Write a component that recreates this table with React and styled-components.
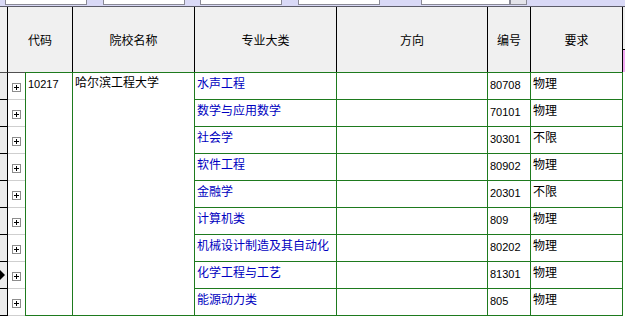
import React from 'react';
import styled, { createGlobalStyle } from 'styled-components';

const GlobalStyle = createGlobalStyle`
  body {
    margin: 0;
    background: #ffffff;
    font-family: "Noto Sans CJK SC", "Noto Sans", sans-serif;
  }
`;

const GREEN = '#1e7a1e';

const filters = [
  { w: 82, ml: 5 },
  { w: 82, ml: 16 },
  { w: 82, ml: 15 },
  { w: 82, ml: 16 },
  { w: 89, ml: 41 },
];

const columns = ['代码', '院校名称', '专业大类', '方向', '编号', '要求'];

const majors = [
  { name: '水声工程', num: '80708', req: '物理' },
  { name: '数学与应用数学', num: '70101', req: '物理' },
  { name: '社会学', num: '30301', req: '不限' },
  { name: '软件工程', num: '80902', req: '物理' },
  { name: '金融学', num: '20301', req: '不限' },
  { name: '计算机类', num: '809', req: '物理' },
  { name: '机械设计制造及其自动化', num: '80202', req: '物理' },
  { name: '化学工程与工艺', num: '81301', req: '物理' },
  { name: '能源动力类', num: '805', req: '物理' },
];

const CURRENT_ROW = 7;

const Toolbar = styled.div`
  display: flex;
  height: 7px;
  box-sizing: border-box;
  background: #d9d9f6;
  border-bottom: 1px solid #5c5c68;
  overflow: hidden;
`;

const FilterBox = styled.div`
  width: ${({ $w }) => $w}px;
  margin-left: ${({ $ml }) => $ml}px;
  height: 5px;
  box-sizing: border-box;
  background: #ffffff;
  border: 1px solid #8a8a96;
  border-top: none;
`;

const DropButton = styled.div`
  width: 17px;
  height: 5px;
  box-sizing: border-box;
  background: #e4e4ea;
  border: 1px solid #8a8a96;
  border-top: none;
`;

const Header = styled.div`
  display: grid;
  grid-template-columns: 8px 65px 122px 142px 151px 43px 92px 2px;
  height: 65px;
  background: #f0f0f0;
`;

const HeadCell = styled.div`
  display: flex;
  align-items: center;
  justify-content: center;
  box-sizing: border-box;
  border-right: 1px solid #000000;
  font-size: 12px;
  color: #000000;
`;

const HeadTail = styled.div`
  display: flex;
  flex-direction: column;
  justify-content: flex-end;
`;

const PinkMark = styled.div`
  height: 22px;
  border-top: 1px solid #000000;
  background: #f2a8f2;
`;

const Body = styled.div`
  display: grid;
  grid-template-columns: 8px 17px 48px 122px 142px 151px 43px 92px 2px;
  grid-template-rows: 28px repeat(8, 27px);
`;

const Selector = styled.div`
  display: flex;
  align-items: center;
  box-sizing: border-box;
  background: #ececec;
  border-right: 1px solid #000000;
  border-bottom: 1px solid #000000;
  border-top: ${({ $first }) => ($first ? '1px solid #505050' : 'none')};
`;

const Arrow = styled.div`
  width: 0;
  height: 0;
  border-top: 5px solid transparent;
  border-bottom: 5px solid transparent;
  border-left: 5px solid #000000;
`;

const ExpandCell = styled.div`
  display: flex;
  align-items: center;
  justify-content: center;
  padding-top: 3px;
  box-sizing: border-box;
  border-bottom: 1px solid #cfcfcf;
  border-top: ${({ $first }) => ($first ? '1px solid #505050' : 'none')};
`;

const PlusBox = styled.div`
  position: relative;
  width: 9px;
  height: 9px;
  box-sizing: border-box;
  border: 1px solid #8c8c8c;
  background: #ffffff;

  &::before,
  &::after {
    content: '';
    position: absolute;
    background: #000000;
  }
  &::before {
    left: 1px;
    top: 3px;
    width: 5px;
    height: 1px;
  }
  &::after {
    left: 3px;
    top: 1px;
    width: 1px;
    height: 5px;
  }
`;

const SpanCell = styled.div`
  grid-row: 1 / 10;
  box-sizing: border-box;
  border-top: 1px solid ${GREEN};
  border-bottom: 1px solid ${GREEN};
  border-right: 1px solid ${GREEN};
  border-left: ${({ $left }) => ($left ? `1px solid ${GREEN}` : 'none')};
  padding: ${({ $num }) => ($num ? '4px 2px' : '2px 2px')};
  font-family: ${({ $num }) =>
    $num ? '"Liberation Sans", Arial, sans-serif' : '"Noto Sans CJK SC", sans-serif'};
  font-size: ${({ $num }) => ($num ? '11px' : '12px')};
  line-height: 14px;
  color: #000000;
`;

const Cell = styled.div`
  box-sizing: border-box;
  border-right: 1px solid ${GREEN};
  border-bottom: 1px solid ${GREEN};
  border-top: ${({ $first }) => ($first ? `1px solid ${GREEN}` : 'none')};
  padding: ${({ $num }) => ($num ? '5px 2px 0' : '3px 2px 0')};
  font-family: ${({ $num }) =>
    $num ? '"Liberation Sans", Arial, sans-serif' : '"Noto Sans CJK SC", sans-serif'};
  font-size: ${({ $num }) => ($num ? '11px' : '12px')};
  line-height: 14px;
  color: ${({ $link }) => ($link ? '#0000c0' : '#000000')};
  white-space: nowrap;
  overflow: hidden;
`;

const Tail = styled.div``;

export default function App() {
  return (
    <>
      <GlobalStyle />
      <Toolbar>
        {filters.map((f, i) => (
          <FilterBox key={i} $w={f.w} $ml={f.ml} />
        ))}
        <DropButton />
      </Toolbar>
      <Header>
        <HeadCell />
        {columns.map((c) => (
          <HeadCell key={c}>{c}</HeadCell>
        ))}
        <HeadTail>
          <PinkMark />
        </HeadTail>
      </Header>
      <Body>
        {majors.map((m, i) => (
          <React.Fragment key={m.name}>
            <Selector $first={i === 0} style={{ gridColumn: 1, gridRow: i + 1 }}>
              {i === CURRENT_ROW && <Arrow />}
            </Selector>
            <ExpandCell $first={i === 0} style={{ gridColumn: 2, gridRow: i + 1 }}>
              <PlusBox />
            </ExpandCell>
          </React.Fragment>
        ))}
        <SpanCell $left $num style={{ gridColumn: 3 }}>
          10217
        </SpanCell>
        <SpanCell style={{ gridColumn: 4 }}>哈尔滨工程大学</SpanCell>
        {majors.map((m, i) => (
          <React.Fragment key={m.name + '-data'}>
            <Cell $first={i === 0} $link style={{ gridColumn: 5, gridRow: i + 1 }}>
              {m.name}
            </Cell>
            <Cell $first={i === 0} style={{ gridColumn: 6, gridRow: i + 1 }} />
            <Cell $first={i === 0} $num style={{ gridColumn: 7, gridRow: i + 1 }}>
              {m.num}
            </Cell>
            <Cell $first={i === 0} style={{ gridColumn: 8, gridRow: i + 1 }}>
              {m.req}
            </Cell>
            <Tail style={{ gridColumn: 9, gridRow: i + 1 }} />
          </React.Fragment>
        ))}
      </Body>
    </>
  );
}
